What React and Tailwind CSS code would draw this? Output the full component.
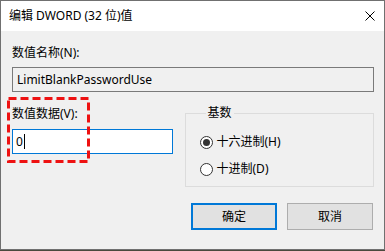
import React from "react";

const font = { fontFamily: "'Noto Sans', 'Noto Sans CJK SC', sans-serif" };

function Radio({ checked, label }) {
  return (
    <label className="flex items-center h-[16px] gap-[4px] text-[12px] text-black">
      <span className="w-[13px] h-[13px] rounded-full border border-[#333333] bg-white flex items-center justify-center">
        {checked && <span className="w-[7px] h-[7px] rounded-full bg-[#333333]" />}
      </span>
      {label}
    </label>
  );
}

export default function App() {
  return (
    <div className="w-[385px] h-[251px] bg-[#4a4a3e]" style={font}>
      <div className="relative h-[250px] border border-[#707070] bg-[#f0f0f0] flex flex-col">
        {/* Title bar */}
        <div className="h-[30px] bg-white flex items-center justify-between pl-[8px] pr-[9px] text-[12px] text-black">
          <span className="leading-[16px]">编辑 DWORD (32 位)值</span>
          <svg width="10" height="10" viewBox="0 0 10 10">
            <path d="M0.5 0.5 L9.5 9.5 M9.5 0.5 L0.5 9.5" stroke="#000" strokeWidth="1" />
          </svg>
        </div>

        <div className="flex flex-col pl-[11px] pr-[10px] pt-[14px] text-[12px] leading-[16px] text-black">
          <span>数值名称(N):</span>
          <div className="mt-[6px] h-[25px] border border-[#7a7a7a] bg-[#f0f0f0] flex items-center px-[4px]">
            LimitBlankPasswordUse
          </div>

          <div className="flex mt-[13px]">
            <div className="w-[161px] flex flex-col pt-[1px]">
              <span>数值数据(V):</span>
              <div className="mt-[7px] h-[25px] border border-[#0078d7] bg-white flex items-center px-[3px]">
                0<span className="w-[1px] h-[15px] bg-black ml-[1px]" />
              </div>
            </div>
            <fieldset className="ml-[12px] w-[190px] h-[82px] border border-[#dcdcdc] pl-[14px] pt-[13px] flex flex-col gap-[11px]">
              <legend className="ml-[6px] px-[2px] leading-[16px]">基数</legend>
              <Radio checked label="十六进制(H)" />
              <Radio label="十进制(D)" />
            </fieldset>
          </div>

          <div className="flex justify-end gap-[10px] mt-[16px] pr-[1px]">
            <button className="w-[86px] h-[27px] border-2 border-[#0078d7] bg-[#e1e1e1] text-[12px]">确定</button>
            <button className="w-[86px] h-[27px] border border-[#adadad] bg-[#e1e1e1] text-[12px]">取消</button>
          </div>
        </div>

        {/* annotation */}
        <svg className="absolute left-[6px] top-[96px]" width="83" height="66" viewBox="0 0 83 66">
          <rect x="1.5" y="1.5" width="80" height="63" fill="none" stroke="#ee1111" strokeWidth="3" strokeDasharray="8 4" />
        </svg>
      </div>
    </div>
  );
}
